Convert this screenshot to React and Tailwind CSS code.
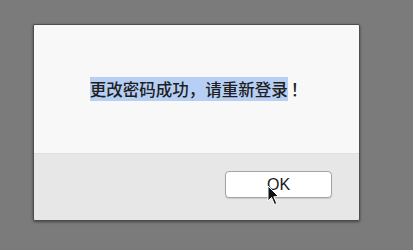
export default function App() {
  return (
    <div className="w-[413px] h-[250px] bg-[#7b7b7b] pl-[33px] pt-[24px] overflow-hidden" style={{ fontFamily: '"Liberation Sans", "Noto Sans CJK SC", sans-serif' }}>
      <div className="w-[327px] h-[197px] flex flex-col border border-[#4d4d4d] rounded-[2px] shadow-[0_1px_3px_rgba(0,0,0,0.45)] overflow-hidden">
        <div className="h-[129px] bg-[#f8f8f8] border-b border-[#e0e0e0] flex items-center justify-center">
          <p className="text-[16.5px] leading-[24px] text-[#1e1e1e] font-medium pl-[4px]" style={{ fontFamily: '"Noto Sans CJK SC", sans-serif' }}>
            <span className="bg-[#b7cff5]">更改密码成功，请重新登录</span>
            <span className="ml-[3px]">！</span>
          </p>
        </div>
        <div className="flex-1 bg-[#e7e7e7] flex justify-end pt-[17px] pr-[27px]">
          <div className="relative">
            <button className="w-[107px] h-[27px] bg-white border border-[#a4a4a4] rounded-[4px] shadow-[0_1px_1px_rgba(0,0,0,0.12)] text-[16px] text-[#1a1a1a] font-medium leading-none pt-[1px]">
              OK
            </button>
            <svg className="absolute left-[42px] top-[14px]" width="13" height="21" viewBox="0 0 13 21">
              <path d="M1 1 L1 16 L4.5 12.5 L7.5 19.5 L9.8 18.5 L6.8 11.8 L11.5 11.5 Z" fill="#111" stroke="#fff" strokeWidth="1" strokeLinejoin="round" />
            </svg>
          </div>
        </div>
      </div>
    </div>
  );
}
